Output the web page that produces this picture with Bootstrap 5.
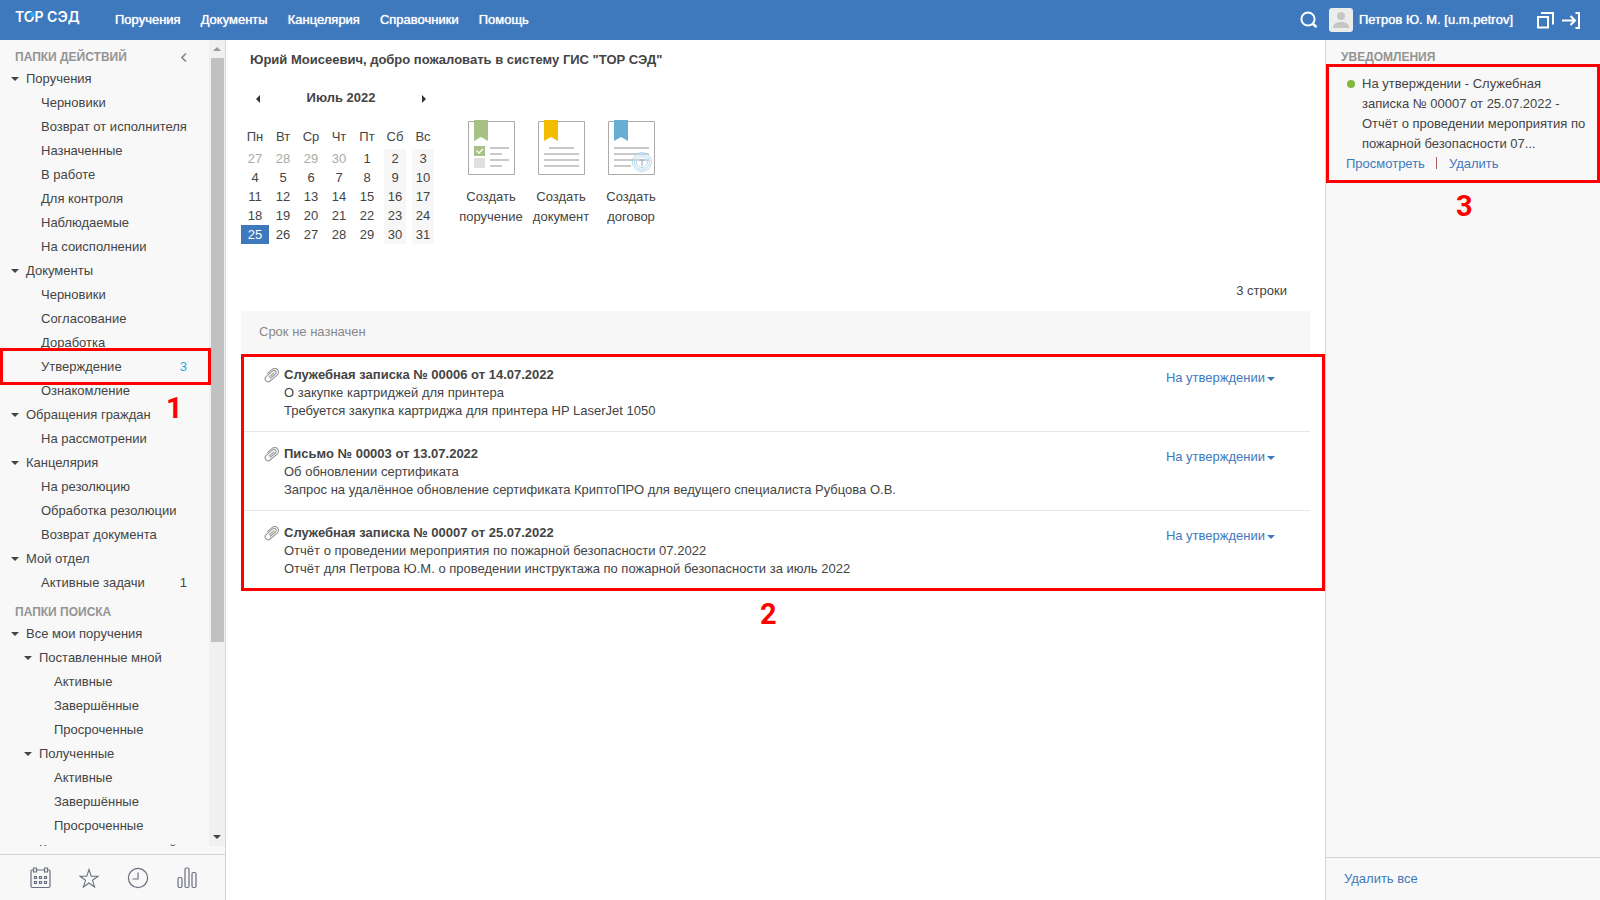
<!DOCTYPE html>
<html lang="ru">
<head>
<meta charset="utf-8">
<meta name="viewport" content="width=device-width, initial-scale=1">
<title>ТОР СЭД</title>
<link href="https://cdn.jsdelivr.net/npm/bootstrap@5.3.0/dist/css/bootstrap.min.css" rel="stylesheet">
<style>
body{font:13px/20px "Liberation Sans",Arial,sans-serif;color:#444;background:#fff}
a{text-decoration:none;color:#3f79bd}
button{font:inherit;color:inherit;background:none;border:0;padding:0}
svg{display:block;flex:none}
.topbar{height:40px;background:#3f79bd;color:#fff}
.topbar a{color:#fff;text-shadow:0 0 1px #fff}
.topbar .brand-name{position:relative;margin-left:15px;width:100px;height:36px;font:600 14px/34px Inter,sans-serif;text-shadow:none}
.brand-name::after{content:"";position:absolute;left:15px;top:12px;width:5px;height:5px;border-radius:0 4px 4px 4px;background:#2fa4f5}
.topmenu{gap:20px}
.avatar{width:24px;height:24px;border-radius:3px;overflow:hidden;background:#ececec;margin:0 6px 0 11px}
.sidebar{width:226px;background:#f8f8f8;border-right:1px solid #d4d4d4}
.caption-line{color:#949494;font-weight:bold;font-size:12px;line-height:19px;padding:8px 22px 0 15px}
.tree{list-style:none;margin:0;padding:0}
.tree a{display:flex;align-items:center;height:24px;padding-right:22px;color:#444;white-space:nowrap}
.tree .lv1{padding-left:11px}
.tree .lv2{padding-left:41px}
.tree .lv2b{padding-left:24px}
.tree .lv3{padding-left:54px}
.tree .lv1::before,.tree .lv2b::before{content:"";border:4px solid transparent;border-top-color:#444;border-bottom:0;margin-right:7px}
.tree .count{margin-left:auto}
.tree .fresh{color:#1fa8e6}
.scrolltrack{flex:0 0 17px;background:#f0f0f0;padding:0 2px}
.scrolltrack .arrow-cell{height:18px}
.scrolltrack .thumb{flex:0 0 584px;background:#c1c1c1}
.tools-row{height:46px;border-top:1px solid #d4d4d4;padding:12px 28px 0 30px;margin-top:8px}
.red-box{position:absolute;border:3px solid #f00;pointer-events:none;z-index:2}
.red-num{position:absolute;color:#f00;font:bold 29px/30px Roboto,sans-serif;z-index:2}
.welcome{font-weight:bold;padding:10px 24px 18px}
.cal{width:196px;margin-left:15px}
.cal-head{padding:0 11px 0 15px;height:20px}
.cal-head svg{margin-top:2px}
.cal table{width:196px;table-layout:fixed;margin-top:19px}
.cal th,.cal td{padding:0;text-align:center;line-height:19px;height:19px}
.cal th{font-weight:normal;height:22px;line-height:20px;vertical-align:top}
.cal .off{color:#aaa}
.cal .we{background:linear-gradient(#f7f7f7,#f7f7f7) center/22px 100% no-repeat}
.cal .today{background:#3f79bd;color:#fff}
.creators{margin:32px 0 0 19px}
.creators a{width:70px;color:#444;text-align:center}
.creators svg{margin:0 auto 12px}
.row-count{padding:37px 38px 10px 0}
.group-title{margin:0 15px;height:42px;padding:11px 18px;background:#f7f7f7;border-radius:3px 3px 0 0;color:#888}
.tasks{margin:0 15px}
.task{padding:13px 28px 11px 23px;border-bottom:1px solid #e6e6e6;line-height:18px}
.task:last-child{border-color:transparent}
.task svg{margin-top:2px}
.task button{color:#3f79bd;padding-top:3px;margin-right:7px;height:21px}
.task button::after{content:"";display:inline-block;border:4px solid transparent;border-top-color:#3f79bd;border-bottom:0;margin-left:2px;vertical-align:1px}
.notices{width:275px;background:#f8f8f8;border-left:1px solid #d4d4d4}
.notice{position:relative;padding:10px 12px 9px 20px;margin-top:-3px}
.notice p{margin:0;padding-left:16px;position:relative}
.notice p::before{content:"";position:absolute;left:1px;top:6px;width:8px;height:8px;border-radius:4px;background:#82b840}
.notice i{width:1px;height:12px;background:#a66;margin:3px 12px 0 11px}
.notices .bottom{border-top:1px solid #d4d4d4;height:43px;padding:11px 18px}
</style>
</head>
<body class="vh-100 d-flex flex-column overflow-hidden">
<header class="topbar d-flex align-items-center flex-shrink-0">
  <a href="#" class="brand-name align-self-start">ТОР СЭД</a>
  <nav class="topmenu d-flex">
    <a href="#">Поручения</a><a href="#">Документы</a><a href="#">Канцелярия</a><a href="#">Справочники</a><a href="#">Помощь</a>
  </nav>
  <div class="ms-auto d-flex align-items-center pe-3">
    <button type="button" aria-label="Поиск"><svg width="18" height="18" viewBox="0 0 18 18" fill="none" stroke="#fff" stroke-width="2"><circle cx="8" cy="8" r="6.600"/><path d="M12.500 12.500l4 3.600" stroke-width="2.600"/></svg></button>
    <svg class="avatar" viewBox="0 0 24 24" fill="#c6c6c6"><circle cx="12" cy="8" r="4"/><path d="M4 20c0-4 3-6 8-6s8 2 8 6z"/></svg>
    <a href="#">Петров Ю. М. [u.m.petrov]</a>
    <button type="button" class="ms-4" aria-label="Окна"><svg width="17" height="17" viewBox="0 0 17 17" fill="none" stroke="#fff" stroke-width="2"><path d="M1 5h10v10.500H1zM4 1h12v11.500"/></svg></button>
    <button type="button" class="ms-2 me-1" aria-label="Выход"><svg width="18" height="17" viewBox="0 0 18 17" fill="none" stroke="#fff" stroke-width="2"><path d="M0 8.500h13M8.500 4l4.500 4.500L8.500 13M13.500 1H17v15h-3.500"/></svg></button>
  </div>
</header>
<div class="d-flex flex-grow-1" style="min-height:0">
  <aside class="sidebar d-flex flex-column flex-shrink-0">
    <div class="d-flex flex-grow-1 overflow-hidden position-relative" style="min-height:0">
      <div class="flex-grow-1">
        <div class="caption-line d-flex justify-content-between align-items-center">ПАПКИ ДЕЙСТВИЙ
          <button type="button" aria-label="Свернуть"><svg width="6" height="9" viewBox="0 0 6 9" fill="none" stroke="#888" stroke-width="1.600"><path d="M5 .5l-4 4 4 4"/></svg></button></div>
        <ul class="tree">
          <li><a href="#" class="lv1">Поручения</a></li>
          <li><a href="#" class="lv2">Черновики</a></li>
          <li><a href="#" class="lv2">Возврат от исполнителя</a></li>
          <li><a href="#" class="lv2">Назначенные</a></li>
          <li><a href="#" class="lv2">В работе</a></li>
          <li><a href="#" class="lv2">Для контроля</a></li>
          <li><a href="#" class="lv2">Наблюдаемые</a></li>
          <li><a href="#" class="lv2">На соисполнении</a></li>
          <li><a href="#" class="lv1">Документы</a></li>
          <li><a href="#" class="lv2">Черновики</a></li>
          <li><a href="#" class="lv2">Согласование</a></li>
          <li><a href="#" class="lv2">Доработка</a></li>
          <li class="position-relative"><a href="#" class="lv2">Утверждение<span class="count fresh">3</span></a>
            <span class="red-box" style="left:0;right:-2px;top:-7px;bottom:-6px"></span><span class="red-num" style="left:166px;top:38px">1</span></li>
          <li><a href="#" class="lv2">Ознакомление</a></li>
          <li><a href="#" class="lv1">Обращения граждан</a></li>
          <li><a href="#" class="lv2">На рассмотрении</a></li>
          <li><a href="#" class="lv1">Канцелярия</a></li>
          <li><a href="#" class="lv2">На резолюцию</a></li>
          <li><a href="#" class="lv2">Обработка резолюции</a></li>
          <li><a href="#" class="lv2">Возврат документа</a></li>
          <li><a href="#" class="lv1">Мой отдел</a></li>
          <li><a href="#" class="lv2">Активные задачи<span class="count">1</span></a></li>
        </ul>
        <div class="caption-line">ПАПКИ ПОИСКА</div>
        <ul class="tree">
          <li><a href="#" class="lv1">Все мои поручения</a></li>
          <li><a href="#" class="lv2b">Поставленные мной</a></li>
          <li><a href="#" class="lv3">Активные</a></li>
          <li><a href="#" class="lv3">Завершённые</a></li>
          <li><a href="#" class="lv3">Просроченные</a></li>
          <li><a href="#" class="lv2b">Полученные</a></li>
          <li><a href="#" class="lv3">Активные</a></li>
          <li><a href="#" class="lv3">Завершённые</a></li>
          <li><a href="#" class="lv3">Просроченные</a></li>
          <li><a href="#" class="lv2b">Контролируемые мной</a></li>
        </ul>
      </div>
      <div class="scrolltrack d-flex flex-column">
        <div class="arrow-cell d-flex align-items-center justify-content-center"><svg width="8" height="4"><path d="M0 4l4-4 4 4z" fill="#999"/></svg></div>
        <div class="thumb"></div>
        <div class="arrow-cell d-flex align-items-center justify-content-center mt-auto"><svg width="8" height="4"><path d="M0 0h8L4 4z" fill="#444"/></svg></div>
      </div>
    </div>
    <div class="tools-row d-flex justify-content-between flex-shrink-0">
      <button type="button" class="align-self-start" aria-label="Календарь"><svg width="21" height="22" viewBox="0 0 21 22" fill="none" stroke="#6b7080" stroke-width="1.200"><path d="M3.500 3H1.600Q1 3 1 4v15q0 1.500 1.500 1.500h16q1.500 0 1.500-1.500V4q0-1-1-1h-1.500M6.500 3h8M3.500 1h3v4h-3zM14.500 1h3v4h-3z"/><path d="M4.500 9.500h2v2h-2zM9.500 9.500h2v2h-2zM14.500 9.500h2v2h-2zM4.500 14.500h2v2h-2zM9.500 14.500h2v2h-2zM14.500 14.500h2v2h-2z"/></svg></button>
      <button type="button" class="align-self-start" aria-label="Избранное"><svg width="20" height="22" viewBox="0 0 20 22" fill="none" stroke="#6b7080" stroke-width="1.100"><path d="M10 2.500l2.200 6.700H19l-5.500 4.100 2.100 6.700L10 16l-5.600 4 2.100-6.700L1 9.200h6.800z"/></svg></button>
      <button type="button" class="align-self-start" aria-label="История"><svg width="22" height="22" viewBox="0 0 22 22" fill="none" stroke="#6b7080" stroke-width="1.200"><circle cx="11" cy="11" r="9.600"/><path d="M11 5.500V12H5.500"/></svg></button>
      <button type="button" class="align-self-start" aria-label="Отчёты"><svg width="20" height="22" viewBox="0 0 20 22" fill="none" stroke="#6b7080" stroke-width="1.200"><rect x="1" y="10.500" width="4" height="10" rx="1.500"/><rect x="8" y="1" width="4" height="19.500" rx="1.500"/><rect x="15" y="5.500" width="4" height="15" rx="1.500"/></svg></button>
    </div>
  </aside>

  <main class="flex-grow-1" style="min-width:0">
    <div class="welcome">Юрий Моисеевич, добро пожаловать в систему ГИС "ТОР СЭД"</div>
    <div class="d-flex">
      <div class="cal">
        <div class="cal-head d-flex justify-content-between align-items-center">
          <button type="button" aria-label="Предыдущий месяц"><svg width="4" height="8"><path d="M4 0v8L0 4z" fill="#333"/></svg></button>
          <b>Июль 2022</b>
          <button type="button" aria-label="Следующий месяц"><svg width="4" height="8"><path d="M0 0v8l4-4z" fill="#333"/></svg></button>
        </div>
        <table>
          <thead><tr><th>Пн</th><th>Вт</th><th>Ср</th><th>Чт</th><th>Пт</th><th>Сб</th><th>Вс</th></tr></thead>
          <tbody>
            <tr><td class="off">27</td><td class="off">28</td><td class="off">29</td><td class="off">30</td><td>1</td><td class="we">2</td><td class="we">3</td></tr>
            <tr><td>4</td><td>5</td><td>6</td><td>7</td><td>8</td><td class="we">9</td><td class="we">10</td></tr>
            <tr><td>11</td><td>12</td><td>13</td><td>14</td><td>15</td><td class="we">16</td><td class="we">17</td></tr>
            <tr><td>18</td><td>19</td><td>20</td><td>21</td><td>22</td><td class="we">23</td><td class="we">24</td></tr>
            <tr><td class="today">25</td><td>26</td><td>27</td><td>28</td><td>29</td><td class="we">30</td><td class="we">31</td></tr>
          </tbody>
        </table>
      </div>
      <div class="creators d-flex">
        <a href="#"><svg width="47" height="55" viewBox="0 0 47 55"><path d="M.5 1.500h46v53H.5z" fill="#fff" stroke="#aaa"/><path d="M6 0h14v21l-7-4-7 4z" fill="#a8c185"/><path d="M6 26h11v10H6z" fill="#a8c185"/><path d="M8.500 30.500l2.500 2.500 4-4" fill="none" stroke="#fff" stroke-width="1.300"/><path d="M6 38h11v10H6z" fill="#e0e0e0"/><path d="M22 28h19M22 34h12M22 40h19M22 46h12" stroke="#c9c9c9" stroke-width="2"/></svg>Создать<br>поручение</a>
        <a href="#"><svg width="47" height="55" viewBox="0 0 47 55"><path d="M.5 1.500h46v53H.5z" fill="#fff" stroke="#aaa"/><path d="M6 0h14v21l-7-4-7 4z" fill="#f0bd00"/><path d="M11 28h25M6 34h35M6 40h35M6 46h35" stroke="#c9c9c9" stroke-width="2"/></svg>Создать<br>документ</a>
        <a href="#"><svg width="47" height="55" viewBox="0 0 47 55"><path d="M.5 1.500h46v53H.5z" fill="#fff" stroke="#aaa"/><path d="M6 0h14v21l-7-4-7 4z" fill="#68aed2"/><path d="M6 28h35M6 34h35M6 40h35M6 46h17" stroke="#c9c9c9" stroke-width="2"/><g fill="none" stroke="#8cc3e2" stroke-opacity=".65"><circle cx="34" cy="42" r="9.500" fill="#fff" fill-opacity=".4"/><circle cx="34" cy="42" r="7.500"/><circle cx="34" cy="42" r="5.500"/><path d="M31 40h6M34 40v6" stroke="#8aa5ba" stroke-width="1.500"/></g></svg>Создать<br>договор</a>
      </div>
    </div>
    <div class="row-count text-end">3 строки</div>
    <div class="group-title">Срок не назначен</div>
    <section class="position-relative">
      <div class="tasks">
        <article class="task d-flex align-items-start"><svg width="20" height="15" viewBox="0 0 20 15" fill="none" stroke="#999" stroke-width="1.100"><g transform="rotate(-40 7 7)"><path d="M4 9h7a2 2 0 0 0 0-4H2.500a3 3 0 0 0 0 6H12a4 3.800 0 0 0 0-7.500H5"/><path d="M4 7.200h7"/></g></svg>
          <div class="flex-grow-1"><b>Служебная записка № 00006 от 14.07.2022</b><br>О закупке картриджей для принтера<br>Требуется закупка картриджа для принтера HP LaserJet 1050</div><button type="button">На утверждении</button></article>
        <article class="task d-flex align-items-start"><svg width="20" height="15" viewBox="0 0 20 15" fill="none" stroke="#999" stroke-width="1.100"><g transform="rotate(-40 7 7)"><path d="M4 9h7a2 2 0 0 0 0-4H2.500a3 3 0 0 0 0 6H12a4 3.800 0 0 0 0-7.500H5"/><path d="M4 7.200h7"/></g></svg>
          <div class="flex-grow-1"><b>Письмо № 00003 от 13.07.2022</b><br>Об обновлении сертификата<br>Запрос на удалённое обновление сертификата КриптоПРО для ведущего специалиста Рубцова О.В.</div><button type="button">На утверждении</button></article>
        <article class="task d-flex align-items-start"><svg width="20" height="15" viewBox="0 0 20 15" fill="none" stroke="#999" stroke-width="1.100"><g transform="rotate(-40 7 7)"><path d="M4 9h7a2 2 0 0 0 0-4H2.500a3 3 0 0 0 0 6H12a4 3.800 0 0 0 0-7.500H5"/><path d="M4 7.200h7"/></g></svg>
          <div class="flex-grow-1"><b>Служебная записка № 00007 от 25.07.2022</b><br>Отчёт о проведении мероприятия по пожарной безопасности 07.2022<br>Отчёт для Петрова Ю.М. о проведении инструктажа по пожарной безопасности за июль 2022</div><button type="button">На утверждении</button></article>
      </div>
      <span class="red-box" style="left:15px;right:0;top:1px;bottom:-1px"></span>
      <span class="red-num" style="left:534px;top:246px">2</span>
    </section>
  </main>

  <aside class="notices d-flex flex-column flex-shrink-0">
    <div class="caption-line">УВЕДОМЛЕНИЯ</div>
    <div class="notice">
      <p>На утверждении - Служебная записка № 00007 от 25.07.2022 - Отчёт о проведении мероприятия по пожарной безопасности 07...</p>
      <div class="d-flex"><a href="#">Просмотреть</a><i></i><a href="#">Удалить</a></div>
      <span class="red-box" style="inset:0"></span>
      <span class="red-num" style="left:130px;top:127px">3</span>
    </div>
    <div class="bottom mt-auto"><a href="#">Удалить все</a></div>
  </aside>
</div>
<script src="https://cdn.jsdelivr.net/npm/bootstrap@5.3.0/dist/js/bootstrap.bundle.min.js"></script>
</body>
</html>
